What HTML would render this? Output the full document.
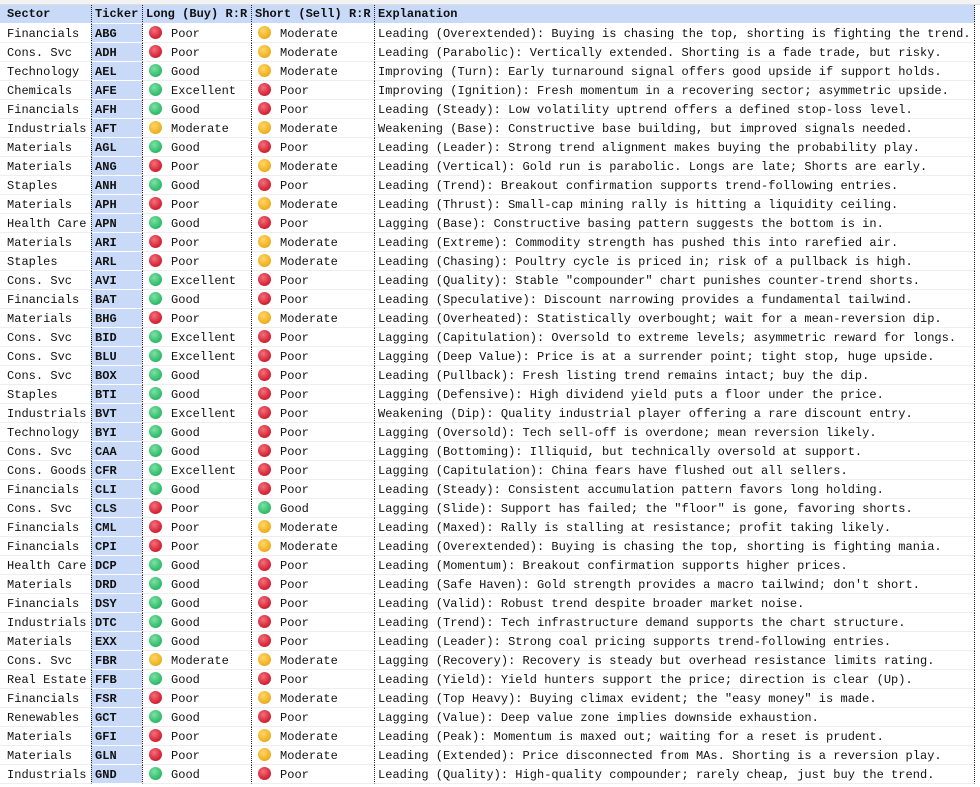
<!DOCTYPE html><html><head><meta charset="utf-8"><style>
body{margin:0;background:#fff;width:980px;height:787px;overflow:hidden;font-family:"Liberation Mono",monospace;font-size:12px;letter-spacing:0.025px;color:#111}
.top{position:absolute;left:0;top:0;width:980px;height:4px;background:#f3f3f3;border-bottom:1px solid #ddd}
.t{position:absolute;left:0;top:5px}
.t>div{display:flex;height:19px;line-height:17px}
.t>div>span{display:block;height:19px;padding-top:2px;white-space:nowrap;overflow:hidden;box-sizing:border-box;border-bottom:1px solid #eee}
.t>div>span:nth-child(1){width:91px;padding-left:7px}
.t>div>span:nth-child(2){width:51px;padding-left:3px;background:#c9daf8;border-left:1px dotted #222;border-bottom:1px solid #fff;font-weight:bold}
.t>div>span:nth-child(3){width:109px;padding-left:5px;border-left:1px dotted #222}
.t>div>span:nth-child(4){width:123px;padding-left:5px;border-left:1px dotted #222}
.t>div>span:nth-child(5){width:601px;padding-left:3px;border-left:1px dotted #222;border-right:1px dotted #222}
.t>div.h>span{background:#c9daf8;font-weight:bold;padding-left:3px;border-bottom:1px solid #fff;padding-top:1px}
.t>div.h>span:first-child{padding-left:7px}
i{display:inline-block;width:13px;height:13px;border-radius:50%;vertical-align:-2px;margin-right:9px;margin-left:1px}
.r{background:radial-gradient(circle at 40% 35%,#f2717a,#d8283a 60%,#b51828)}
.y{background:radial-gradient(circle at 40% 35%,#ffd66a,#f0b323 60%,#d49a10)}
.g{background:radial-gradient(circle at 40% 35%,#7fe0a6,#34c06e 60%,#22a055)}
</style></head><body><div class="top"></div>
<div class="t">
<div class="h"><span>Sector</span><span>Ticker</span><span>Long (Buy) R:R</span><span>Short (Sell) R:R</span><span>Explanation</span></div>
<div><span>Financials</span><span>ABG</span><span><i class="r"></i>Poor</span><span><i class="y"></i>Moderate</span><span>Leading (Overextended): Buying is chasing the top, shorting is fighting the trend.</span></div>
<div><span>Cons. Svc</span><span>ADH</span><span><i class="r"></i>Poor</span><span><i class="y"></i>Moderate</span><span>Leading (Parabolic): Vertically extended. Shorting is a fade trade, but risky.</span></div>
<div><span>Technology</span><span>AEL</span><span><i class="g"></i>Good</span><span><i class="y"></i>Moderate</span><span>Improving (Turn): Early turnaround signal offers good upside if support holds.</span></div>
<div><span>Chemicals</span><span>AFE</span><span><i class="g"></i>Excellent</span><span><i class="r"></i>Poor</span><span>Improving (Ignition): Fresh momentum in a recovering sector; asymmetric upside.</span></div>
<div><span>Financials</span><span>AFH</span><span><i class="g"></i>Good</span><span><i class="r"></i>Poor</span><span>Leading (Steady): Low volatility uptrend offers a defined stop-loss level.</span></div>
<div><span>Industrials</span><span>AFT</span><span><i class="y"></i>Moderate</span><span><i class="y"></i>Moderate</span><span>Weakening (Base): Constructive base building, but improved signals needed.</span></div>
<div><span>Materials</span><span>AGL</span><span><i class="g"></i>Good</span><span><i class="r"></i>Poor</span><span>Leading (Leader): Strong trend alignment makes buying the probability play.</span></div>
<div><span>Materials</span><span>ANG</span><span><i class="r"></i>Poor</span><span><i class="y"></i>Moderate</span><span>Leading (Vertical): Gold run is parabolic. Longs are late; Shorts are early.</span></div>
<div><span>Staples</span><span>ANH</span><span><i class="g"></i>Good</span><span><i class="r"></i>Poor</span><span>Leading (Trend): Breakout confirmation supports trend-following entries.</span></div>
<div><span>Materials</span><span>APH</span><span><i class="r"></i>Poor</span><span><i class="y"></i>Moderate</span><span>Leading (Thrust): Small-cap mining rally is hitting a liquidity ceiling.</span></div>
<div><span>Health Care</span><span>APN</span><span><i class="g"></i>Good</span><span><i class="r"></i>Poor</span><span>Lagging (Base): Constructive basing pattern suggests the bottom is in.</span></div>
<div><span>Materials</span><span>ARI</span><span><i class="r"></i>Poor</span><span><i class="y"></i>Moderate</span><span>Leading (Extreme): Commodity strength has pushed this into rarefied air.</span></div>
<div><span>Staples</span><span>ARL</span><span><i class="r"></i>Poor</span><span><i class="y"></i>Moderate</span><span>Leading (Chasing): Poultry cycle is priced in; risk of a pullback is high.</span></div>
<div><span>Cons. Svc</span><span>AVI</span><span><i class="g"></i>Excellent</span><span><i class="r"></i>Poor</span><span>Leading (Quality): Stable "compounder" chart punishes counter-trend shorts.</span></div>
<div><span>Financials</span><span>BAT</span><span><i class="g"></i>Good</span><span><i class="r"></i>Poor</span><span>Leading (Speculative): Discount narrowing provides a fundamental tailwind.</span></div>
<div><span>Materials</span><span>BHG</span><span><i class="r"></i>Poor</span><span><i class="y"></i>Moderate</span><span>Leading (Overheated): Statistically overbought; wait for a mean-reversion dip.</span></div>
<div><span>Cons. Svc</span><span>BID</span><span><i class="g"></i>Excellent</span><span><i class="r"></i>Poor</span><span>Lagging (Capitulation): Oversold to extreme levels; asymmetric reward for longs.</span></div>
<div><span>Cons. Svc</span><span>BLU</span><span><i class="g"></i>Excellent</span><span><i class="r"></i>Poor</span><span>Lagging (Deep Value): Price is at a surrender point; tight stop, huge upside.</span></div>
<div><span>Cons. Svc</span><span>BOX</span><span><i class="g"></i>Good</span><span><i class="r"></i>Poor</span><span>Leading (Pullback): Fresh listing trend remains intact; buy the dip.</span></div>
<div><span>Staples</span><span>BTI</span><span><i class="g"></i>Good</span><span><i class="r"></i>Poor</span><span>Lagging (Defensive): High dividend yield puts a floor under the price.</span></div>
<div><span>Industrials</span><span>BVT</span><span><i class="g"></i>Excellent</span><span><i class="r"></i>Poor</span><span>Weakening (Dip): Quality industrial player offering a rare discount entry.</span></div>
<div><span>Technology</span><span>BYI</span><span><i class="g"></i>Good</span><span><i class="r"></i>Poor</span><span>Lagging (Oversold): Tech sell-off is overdone; mean reversion likely.</span></div>
<div><span>Cons. Svc</span><span>CAA</span><span><i class="g"></i>Good</span><span><i class="r"></i>Poor</span><span>Lagging (Bottoming): Illiquid, but technically oversold at support.</span></div>
<div><span>Cons. Goods</span><span>CFR</span><span><i class="g"></i>Excellent</span><span><i class="r"></i>Poor</span><span>Lagging (Capitulation): China fears have flushed out all sellers.</span></div>
<div><span>Financials</span><span>CLI</span><span><i class="g"></i>Good</span><span><i class="r"></i>Poor</span><span>Leading (Steady): Consistent accumulation pattern favors long holding.</span></div>
<div><span>Cons. Svc</span><span>CLS</span><span><i class="r"></i>Poor</span><span><i class="g"></i>Good</span><span>Lagging (Slide): Support has failed; the "floor" is gone, favoring shorts.</span></div>
<div><span>Financials</span><span>CML</span><span><i class="r"></i>Poor</span><span><i class="y"></i>Moderate</span><span>Leading (Maxed): Rally is stalling at resistance; profit taking likely.</span></div>
<div><span>Financials</span><span>CPI</span><span><i class="r"></i>Poor</span><span><i class="y"></i>Moderate</span><span>Leading (Overextended): Buying is chasing the top, shorting is fighting mania.</span></div>
<div><span>Health Care</span><span>DCP</span><span><i class="g"></i>Good</span><span><i class="r"></i>Poor</span><span>Leading (Momentum): Breakout confirmation supports higher prices.</span></div>
<div><span>Materials</span><span>DRD</span><span><i class="g"></i>Good</span><span><i class="r"></i>Poor</span><span>Leading (Safe Haven): Gold strength provides a macro tailwind; don't short.</span></div>
<div><span>Financials</span><span>DSY</span><span><i class="g"></i>Good</span><span><i class="r"></i>Poor</span><span>Leading (Valid): Robust trend despite broader market noise.</span></div>
<div><span>Industrials</span><span>DTC</span><span><i class="g"></i>Good</span><span><i class="r"></i>Poor</span><span>Leading (Trend): Tech infrastructure demand supports the chart structure.</span></div>
<div><span>Materials</span><span>EXX</span><span><i class="g"></i>Good</span><span><i class="r"></i>Poor</span><span>Leading (Leader): Strong coal pricing supports trend-following entries.</span></div>
<div><span>Cons. Svc</span><span>FBR</span><span><i class="y"></i>Moderate</span><span><i class="y"></i>Moderate</span><span>Lagging (Recovery): Recovery is steady but overhead resistance limits rating.</span></div>
<div><span>Real Estate</span><span>FFB</span><span><i class="g"></i>Good</span><span><i class="r"></i>Poor</span><span>Leading (Yield): Yield hunters support the price; direction is clear (Up).</span></div>
<div><span>Financials</span><span>FSR</span><span><i class="r"></i>Poor</span><span><i class="y"></i>Moderate</span><span>Leading (Top Heavy): Buying climax evident; the "easy money" is made.</span></div>
<div><span>Renewables</span><span>GCT</span><span><i class="g"></i>Good</span><span><i class="r"></i>Poor</span><span>Lagging (Value): Deep value zone implies downside exhaustion.</span></div>
<div><span>Materials</span><span>GFI</span><span><i class="r"></i>Poor</span><span><i class="y"></i>Moderate</span><span>Leading (Peak): Momentum is maxed out; waiting for a reset is prudent.</span></div>
<div><span>Materials</span><span>GLN</span><span><i class="r"></i>Poor</span><span><i class="y"></i>Moderate</span><span>Leading (Extended): Price disconnected from MAs. Shorting is a reversion play.</span></div>
<div><span>Industrials</span><span>GND</span><span><i class="g"></i>Good</span><span><i class="r"></i>Poor</span><span>Leading (Quality): High-quality compounder; rarely cheap, just buy the trend.</span></div>
</div></body></html>
